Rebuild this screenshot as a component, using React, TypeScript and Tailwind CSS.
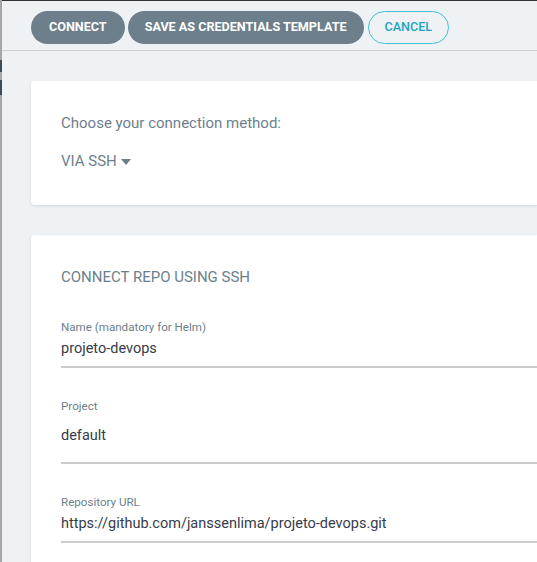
import React from 'react';

const font = { fontFamily: 'Roboto, "Liberation Sans", sans-serif' };

const Field: React.FC<{ label: string; value: string; gap: string; pb: string }> = ({ label, value, gap, pb }) => (
  <div>
    <div className="text-[11.6px] leading-[16px] text-[#6d7f8b]">{label}</div>
    <div className={`${gap} ${pb} border-b-2 border-[#cccccc] text-[14.5px] leading-[20px] text-[#363c4a]`}>{value}</div>
  </div>
);

export default function App() {
  return (
    <div style={font} className="flex h-[562px] w-[537px] overflow-hidden bg-[#eef2f5]">
      {/* left edge of underlying panel */}
      <div className="flex w-[2px] shrink-0 flex-col bg-[#a3a7aa]">
        <div className="h-[60px]" />
        <div className="h-[12px] bg-[#3e4b57]" />
        <div className="h-[8px]" />
        <div className="h-[15px] bg-[#3e4b57]" />
      </div>

      <div className="flex min-w-0 flex-1 flex-col border-t border-[#333333]">
        {/* toolbar */}
        <div className="flex h-[50px] shrink-0 items-center border-b border-[#c9d1d6] pl-[29px] pt-[3px]">
          <button className="h-[33px] rounded-full bg-[#6d7f8b] px-[18px] text-[12.6px] font-bold text-white">CONNECT</button>
          <button className="ml-[3px] h-[33px] rounded-full bg-[#6d7f8b] px-[17px] text-[12.6px] font-bold text-white">SAVE AS CREDENTIALS TEMPLATE</button>
          <button className="ml-[4px] h-[33px] rounded-full border border-[#3fc1d6] bg-transparent px-[16px] text-[12.6px] font-medium text-[#1fa4bd]">CANCEL</button>
        </div>

        <div className="flex shrink-0 flex-col gap-[30px] pl-[29px] pt-[30px]">
          {/* connection method */}
          <div className="rounded-l-[4px] bg-white pb-[34px] pl-[30px] pt-[32px] shadow-[0_1px_3px_rgba(0,0,0,0.12)]">
            <div className="text-[15px] leading-[20px] text-[#6d7f8b]">Choose your connection method:</div>
            <div className="mt-[18px] flex items-center gap-[4px] text-[15px] leading-[20px] text-[#6d7f8b]">
              <span>VIA SSH</span>
              <svg width="10" height="6" viewBox="0 0 10 6" className="mt-[1px]">
                <path d="M0 0 L10 0 L5 6 Z" fill="#6d7f8b" />
              </svg>
            </div>
          </div>

          {/* repo form */}
          <div className="h-[400px] rounded-l-[4px] bg-white pl-[30px] pt-[32px] shadow-[0_1px_3px_rgba(0,0,0,0.12)]">
            <div className="text-[15px] leading-[20px] text-[#6d7f8b]">CONNECT REPO USING SSH</div>
            <div className="mt-[32px] flex flex-col gap-[30px]">
              <Field label="Name (mandatory for Helm)" value="projeto-devops" gap="mt-[4px]" pb="pb-[7px]" />
              <Field label="Project" value="default" gap="mt-[12px]" pb="pb-[16px]" />
              <Field label="Repository URL" value="https://github.com/janssenlima/projeto-devops.git" gap="mt-[4px]" pb="pb-[7px]" />
            </div>
          </div>
        </div>
      </div>
    </div>
  );
}
